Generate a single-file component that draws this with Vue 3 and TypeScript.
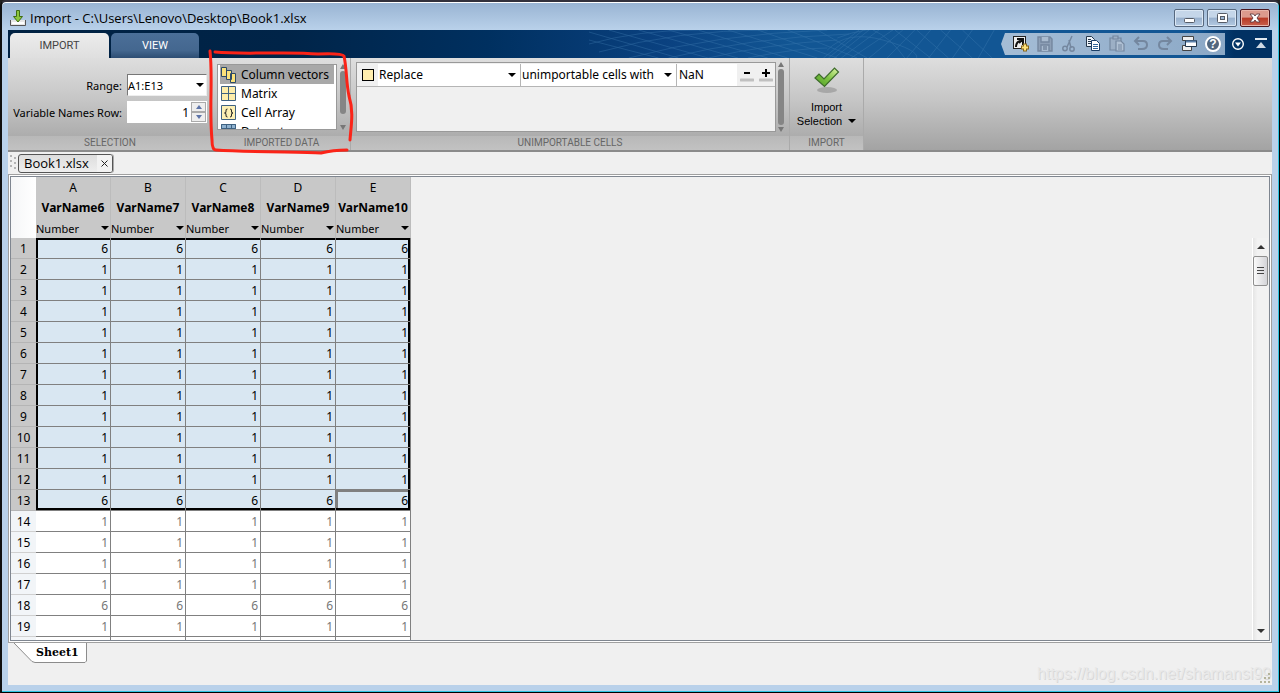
<script setup lang="ts">
import { ref } from 'vue'

interface Column {
  letter: string
  name: string
}

const columns: Column[] = [
  { letter: 'A', name: 'VarName6' },
  { letter: 'B', name: 'VarName7' },
  { letter: 'C', name: 'VarName8' },
  { letter: 'D', name: 'VarName9' },
  { letter: 'E', name: 'VarName10' },
]

const values: number[] = [6, 1, 1, 1, 1, 1, 1, 1, 1, 1, 1, 1, 6, 1, 1, 1, 1, 6, 1]
const selectedRows = 13

const nameRow = ref<number>(1)
const replacement = ref<string>('NaN')
const outputTypes: string[] = ['Column vectors', 'Matrix', 'Cell Array', 'Dataset']
const outputType = ref<string>('Column vectors')

function step(delta: number): void {
  nameRow.value = Math.max(0, nameRow.value + delta)
}

function cellClass(row: number, col: number): Record<string, boolean> {
  const inside = row <= selectedRows
  const last = columns.length - 1
  return {
    inside,
    'edge-top': inside && row === 1,
    'edge-bottom': row === selectedRows,
    'edge-left': inside && col === 0,
    'edge-right': inside && col === last,
  }
}
</script>

<template>
  <div class="window">
    <header class="titlebar">
      <svg class="app-icon" width="18" height="18" viewBox="0 0 18 18" aria-hidden="true">
        <path d="M1.500 11v5.500h15V11" fill="#e6e6e6" stroke="#555" />
        <path d="M3 14h12" stroke="#fff" stroke-width="2" />
        <path d="M7.500 1.500h3v6h3L9 13 4.500 7.500h3z" fill="#8cc63f" stroke="#3f6d12" />
      </svg>
      <h1>Import - C:\Users\Lenovo\Desktop\Book1.xlsx</h1>
      <div class="window-buttons">
        <button type="button" aria-label="Minimize">
          <svg width="28" height="16" viewBox="1 0 28 16"><rect x="10.500" y="8.500" width="10" height="4" rx="1" fill="#fff" stroke="#555b66" /></svg>
        </button>
        <button type="button" aria-label="Maximize">
          <svg width="28" height="16" viewBox="1 0 28 16"><rect x="10.500" y="3.500" width="10" height="9" rx="1" fill="#fff" stroke="#555b66" /><rect x="13.500" y="6.500" width="4" height="3" fill="#9db6d3" stroke="#555b66" /></svg>
        </button>
        <button type="button" class="close" aria-label="Close">
          <svg width="28" height="16" viewBox="1 0 28 16"><path d="M10 4h3.500L15 6l1.500-2H20l-3 4 3 4h-3.500L15 10l-1.500 2H10l3-4z" fill="#fff" stroke="#5b3a40" stroke-width=".9" /></svg>
        </button>
      </div>
    </header>

    <div class="client">
      <nav class="band">
        <svg class="mesh" viewBox="0 0 420 28" preserveAspectRatio="none" aria-hidden="true">
          <g fill="none" stroke="#4a86ba" stroke-width=".7" opacity=".45">
            <path d="M20 0 120 28M50 0l100 28M80 0l100 28M110 0l90 28M140 0l90 28M170 0l80 28M200 0l70 28M230 0l50 28M0 10l70 18M0 2l90 26" />
            <path d="M10 22Q90 0 180 0M40 28Q130 4 240 0M80 28Q160 8 262 4M120 28Q180 14 250 10M160 28Q210 18 240 18M0 14Q50 0 110 0" />
            <path d="M236 28 272 0M241 28 276 0M247 28 282 0M254 28 292 0M264 28 306 0M282 28 316 0M300 28 328 0M320 28 344 0M342 28 364 0M366 28 386 0M392 28 408 0" />
            <path d="M240 20Q260 0 296 10T330 28M286 0Q304 8 318 28M308 0l36 28M330 0l32 28M354 0l32 28M376 0l30 28M250 8Q280-4 306 0" />
          </g>
        </svg>
        <button type="button" class="tab current">IMPORT</button>
        <button type="button" class="tab">VIEW</button>
        <div class="quick">
          <button type="button" aria-label="Shortcut">
            <svg width="18" height="18" viewBox="0 0 18 18"><rect x="1.500" y="1.500" width="12" height="12" fill="#eee" stroke="#222" /><path d="M4 12q0-5 4-6M5 4h6v6M11 4 7 8" fill="none" stroke="#111" stroke-width="2" /><path d="M13 8.500v8M9 12.500h8" stroke="#87671c" stroke-width="4" /><path d="M13 9.500v6M10 12.500h6" stroke="#ffe27a" stroke-width="2" /></svg>
          </button>
          <button type="button" aria-label="Save">
            <svg width="18" height="18" viewBox="0 0 18 18" fill="none" stroke="#74879f" stroke-width="1.400"><path d="M2 2h12l2 2v12H2z" fill="#8d9fb6" /><path d="M5 2v5h8V2M5 16v-6h8v6" fill="#a9bbcf" /><path d="M7 12h4M7 14h4" /></svg>
          </button>
          <button type="button" aria-label="Cut">
            <svg width="18" height="18" viewBox="0 0 18 18" fill="none" stroke="#74879f" stroke-width="1.500"><path d="M12 1 7 12M9 5l2 8" /><circle cx="5" cy="13.500" r="2.200" /><circle cx="12" cy="14" r="2.200" /></svg>
          </button>
          <button type="button" aria-label="Copy">
            <svg width="18" height="18" viewBox="0 0 18 18"><path d="M2.500 1.500h5l3 3v7h-8z" fill="#eef4fa" stroke="#24364a" /><path d="M4 4.500h3M4 6.500h5M4 8.500h5" stroke="#24364a" /><path d="M7.500 5.500h5l3 3v7h-8z" fill="#fff" stroke="#1c3f66" /><path d="M9 9.500h5M9 11.500h5M9 13.500h5" stroke="#336699" /></svg>
          </button>
          <button type="button" aria-label="Paste">
            <svg width="18" height="18" viewBox="0 0 18 18" fill="#9cafc5" stroke="#74879f" stroke-width="1.200"><path d="M2 3h11v12H2z" /><path d="M5 1h5v3H5z" /><path d="M8 6h5l3 3v7H8z" fill="#b0c1d4" /><path d="M10 10h4M10 12h4M10 14h4" /></svg>
          </button>
          <button type="button" aria-label="Undo">
            <svg width="18" height="18" viewBox="0 0 18 18" fill="none" stroke="#74879f" stroke-width="2"><path d="M3 6h8q4 0 4 4t-5 4H6M7 2 3 6l4 4" /></svg>
          </button>
          <button type="button" aria-label="Redo">
            <svg width="18" height="18" viewBox="0 0 18 18" fill="none" stroke="#74879f" stroke-width="2"><path d="M15 6H7q-4 0-4 4t5 4h4M11 2l4 4-4 4" /></svg>
          </button>
          <button type="button" aria-label="Switch windows">
            <svg width="18" height="18" viewBox="0 0 18 18"><path d="M2.500 1.500h11v4h-11z" fill="#eee" stroke="#444" /><path d="M2.500 10.500h9v5h-9z" fill="#eee" stroke="#444" /><path d="M5.500 5.500h11v6h-11z" fill="#fff" stroke="#23384f" /><path d="M6 6.500h10" stroke="#5a7fa8" stroke-width="2" /></svg>
          </button>
          <button type="button" aria-label="Help" class="help">
            <span>?</span>
          </button>
        </div>
        <button type="button" class="corner" aria-label="Options">
          <svg width="14" height="14" viewBox="0 0 14 14"><circle cx="7" cy="7" r="5.300" fill="none" stroke="#fff" stroke-width="1.400" /><path d="M4 5.500h6L7 9.500z" fill="#fff" /></svg>
        </button>
        <button type="button" class="corner" aria-label="Minimize toolstrip">
          <svg width="14" height="14" viewBox="0 0 14 14"><path d="M1 2h12" stroke="#e2e9f0" stroke-width="2" /><path d="M7 5l5 6H2z" fill="#cfd9e4" /></svg>
        </button>
      </nav>

      <div class="toolstrip">
        <section class="section selection">
          <div class="body">
            <label for="range">Range:</label>
            <div class="pick range-pick">
              <select id="range"><option>A1:E13</option></select>
            </div>
            <label for="name-row">Variable Names Row:</label>
            <div class="spin">
              <input id="name-row" v-model="nameRow" type="text" inputmode="numeric" />
              <div class="spin-buttons">
                <button type="button" aria-label="Increase" @click="step(1)"><svg width="6" height="4" viewBox="0 0 6 4"><path d="M0 4 3 0l3 4z" fill="#5d74a8" /></svg></button>
                <button type="button" aria-label="Decrease" @click="step(-1)"><svg width="6" height="4" viewBox="0 0 6 4"><path d="M0 0h6L3 4z" fill="#5d74a8" /></svg></button>
              </div>
            </div>
          </div>
          <h2>SELECTION</h2>
        </section>

        <section class="section data">
          <div class="body">
            <ul class="types">
              <li v-for="(type, i) in outputTypes" :key="type">
                <button type="button" :class="{ chosen: type === outputType }" @click="outputType = type">
                  <svg width="16" height="16" viewBox="0 0 16 16" aria-hidden="true">
                    <g v-if="i === 0" fill="#fbe27a" stroke="#2d4a66"><path d="M.5.5h5v9h-5zM5.500 3.500h5v9h-5zM9.500 6.500h5v9h-5z" /></g>
                    <g v-else-if="i === 1"><path d="M.5.5h14v14H.5z" fill="#fdedaa" stroke="#3f6282" /><path d="M7.500.5v14M.5 7.500h14" stroke="#3f6282" /></g>
                    <g v-else-if="i === 2" fill="none" stroke="#3f6282"><path d="M.5.5h14v14H.5z" fill="#fdf0b4" /><path d="M6.500 4q-2 0-1.500 2t-1.500 2Q5.500 8 5 10t1.500 2M9 4q2 0 1.500 2T12 8q-2 0-1.500 2T9 12" stroke="#222" /></g>
                    <g v-else><path d="M.5.5h14v14H.5z" fill="#fff" stroke="#3f6282" /><path d="M.5.5h14v4H.5z" fill="#8fb2d0" stroke="#3f6282" /><path d="M5.500.5v14M10.500.5v14M.5 8.500h14" stroke="#3f6282" /></g>
                  </svg>
                  {{ type }}
                </button>
              </li>
            </ul>
            <div class="slider list-slider"><i class="up"></i><i class="bar"></i><i class="down"></i></div>
          </div>
          <h2>IMPORTED DATA</h2>
        </section>

        <section class="section rules">
          <div class="body">
            <div class="rule-list">
              <div class="rule">
                <span class="swatch"></span>
                <div class="pick action-pick">
                  <select aria-label="Action"><option>Replace</option></select>
                </div>
                <div class="pick target-pick">
                  <select aria-label="Target"><option>unimportable cells with</option></select>
                </div>
                <input v-model="replacement" type="text" aria-label="Replacement value" />
                <button type="button" aria-label="Remove rule"><svg width="14" height="14" viewBox="0 0 14 14"><path d="M4 5h6" stroke="#000" stroke-width="2" /><path d="M1 12h12" stroke="#c0c0c0" stroke-width="3" stroke-linecap="round" /></svg></button>
                <button type="button" aria-label="Add rule"><svg width="14" height="14" viewBox="0 0 14 14"><path d="M3 5h8M7 1v8" stroke="#000" stroke-width="2" /><path d="M1 12h12" stroke="#c0c0c0" stroke-width="3" stroke-linecap="round" /></svg></button>
              </div>
            </div>
            <div class="slider"><i class="up"></i><i class="bar"></i><i class="down"></i></div>
          </div>
          <h2>UNIMPORTABLE CELLS</h2>
        </section>

        <section class="section run">
          <div class="body">
            <button type="button" class="import">
              <svg width="28" height="28" viewBox="0 0 28 28" aria-hidden="true">
                <defs>
                  <linearGradient id="tick" x1="0" y1="1" x2="1" y2="0"><stop offset="0" stop-color="#4f9e26" /><stop offset=".5" stop-color="#7dc242" /><stop offset="1" stop-color="#e0f7a8" /></linearGradient>
                </defs>
                <ellipse cx="14" cy="24" rx="10" ry="3" fill="#8f8f8f" opacity=".6" />
                <path d="M2 12l4-4 5 5L21.500 2l4 4L11.500 20.500z" fill="url(#tick)" stroke="#3d6b2b" stroke-width="1.200" />
              </svg>
              <span>Import</span>
              <span class="more">Selection <i></i></span>
            </button>
          </div>
          <h2>IMPORT</h2>
        </section>
      </div>

      <div class="documents">
        <svg class="grip" width="6" height="16" viewBox="0 0 6 16" fill="#b4b4b4" aria-hidden="true"><path d="M0 1h2v2H0zM4 3h2v2H4zM0 6h2v2H0zM4 8h2v2H4zM0 11h2v2H0zM4 13h2v2H4z" /></svg>
        <div class="document">
          <a href="#">Book1.xlsx</a>
          <button type="button" aria-label="Close Book1.xlsx"><svg width="7" height="7" viewBox="0 0 7 7"><path d="M.5.5l6 6M6.500.5l-6 6" stroke="#222" /></svg></button>
        </div>
      </div>

      <main class="frame">
        <div class="sheet">
          <table>
            <thead>
              <tr>
                <th class="blank"></th>
                <th v-for="column in columns" :key="column.letter" scope="col">
                  <span class="letter">{{ column.letter }}</span>
                  <span class="name">{{ column.name }}</span>
                  <div class="pick kind">
                    <select :aria-label="'Type of ' + column.name"><option>Number</option></select>
                  </div>
                </th>
              </tr>
            </thead>
            <tbody>
              <tr v-for="(value, r) in values" :key="r">
                <th scope="row" :class="{ marked: r < selectedRows }">{{ r + 1 }}</th>
                <td v-for="(column, c) in columns" :key="column.letter" :class="cellClass(r + 1, c)">{{ value }}</td>
              </tr>
              <tr>
                <th></th>
                <td v-for="column in columns" :key="column.letter"></td>
              </tr>
            </tbody>
          </table>
          <div class="scroll">
            <button type="button" aria-label="Scroll up"><svg width="8" height="4" viewBox="0 0 8 4"><path d="M0 4 4 0l4 4z" fill="#333" /></svg></button>
            <div class="thumb"><svg width="7" height="8" viewBox="0 0 7 8"><path d="M0 .5h7M0 3.500h7M0 6.500h7" stroke="#444" /></svg></div>
            <button type="button" class="end" aria-label="Scroll down"><svg width="8" height="4" viewBox="0 0 8 4"><path d="M0 0h8L4 4z" fill="#333" /></svg></button>
          </div>
        </div>
      </main>

      <footer class="status">
        <button type="button" class="sheet-tab">
          <svg width="80" height="20" viewBox="0 0 80 20" aria-hidden="true"><path d="M6 0 24 18.500 27 19.500H77l1.500-1.500V0" fill="#fff" stroke="#8c8c8c" /></svg>
          <span>Sheet1</span>
        </button>
        <span class="watermark">https://blog.csdn.net/shamansi99</span>
        <svg class="resize" width="12" height="12" viewBox="0 0 12 12" fill="#b5b49c" aria-hidden="true"><path d="M8 0h2v2H8zM8 4h2v2H8zM4 4h2v2H4zM8 8h2v2H8zM4 8h2v2H4zM0 8h2v2H0z" /></svg>
      </footer>
    </div>

    <svg class="marker" width="148" height="108" viewBox="0 0 148 108" aria-hidden="true">
      <path d="M3 3C6 30 2 60 5 92Q5 102 9 102C40 104 90 104 114 105Q126 102 140 102M8 4C40 7 80 3 111 6Q135 5 137 8C140 22 139 34 142 48C147 64 144 78 143 92" fill="none" stroke="#fb2418" stroke-width="3" stroke-linecap="round" stroke-linejoin="round" />
    </svg>
  </div>
</template>

<style>
html,
body,
#app {
  height: 100%;
  margin: 0;
}

body {
  overflow: hidden;
  background: #222;
}
</style>

<style scoped>
* {
  box-sizing: border-box;
}

button,
input,
select {
  margin: 0;
  padding: 0;
  border: 0;
  border-radius: 0;
  background: none;
  color: inherit;
  font: inherit;
}

svg {
  display: block;
  flex: none;
}

.window {
  position: relative;
  display: flex;
  flex-direction: column;
  height: 100%;
  padding: 0 7px 7px 6px;
  border: 1px solid #000;
  border-top: 2px solid #33313c;
  border-left: 2px solid #101010;
  border-radius: 6px 6px 0 0;
  background: linear-gradient(#98b3d2, #b9d1ea 28px);
  box-shadow: inset -1px -1px #2fc3e0, inset 0 1px #fff;
  color: #000;
  font-family: "Noto Sans", "Open Sans", sans-serif;
  font-size: 12px;
}

.titlebar {
  display: flex;
  align-items: center;
  flex: none;
  height: 28px;
  padding: 4px 2px 0 1px;
}

.titlebar h1 {
  flex: 1;
  margin: 0 0 0 3px;
  font-family: "Open Sans", "Noto Sans", sans-serif;
  font-size: 13px;
  font-weight: 400;
  line-height: 20px;
}

.window-buttons {
  display: flex;
  gap: 3px;
}

.window-buttons button {
  height: 18px;
  border: 1px solid #56687f;
  border-radius: 2px;
  background: linear-gradient(#c5d6e9 45%, #98b0cd 50%, #b4cae2);
  box-shadow: inset 0 0 0 1px #dbe7f4;
}

.window-buttons .close {
  border-color: #4b1720;
  background: linear-gradient(#dc9a8d 45%, #b83a26 50%, #c9604d);
  box-shadow: inset 0 0 0 1px #e8b5aa;
}

.client {
  display: flex;
  flex: 1;
  flex-direction: column;
  min-height: 0;
  background: #f0f0f0;
}

.band {
  position: relative;
  display: flex;
  align-items: flex-end;
  flex: none;
  gap: 2px;
  height: 28px;
  padding-left: 2px;
  background: linear-gradient(90deg, #002142, #002448 22%, #003060 38%, #0a4180 52%, #125694 62%, #125694 94%, #013163 97%);
}

.mesh {
  position: absolute;
  top: 0;
  right: 21%;
  width: 33%;
  height: 28px;
}

.tab {
  position: relative;
  width: 88px;
  height: 25px;
  border-radius: 5px 5px 0 0;
  background: linear-gradient(#4b6f98, #44678f 70%, #2d4d73);
  color: #fff;
  font-family: Roboto, "Liberation Sans", sans-serif;
  font-size: 11px;
}

.tab.current {
  width: 99px;
  background: linear-gradient(#ececec, #dfdfdf);
  color: #444;
}

.quick {
  position: relative;
  display: flex;
  align-items: center;
  align-self: flex-start;
  gap: 6px;
  height: 22px;
  margin: 3px 0 0 auto;
  padding: 0 3px 0 11px;
  background: linear-gradient(90deg, #a5bdd6, #8ba8c6);
  clip-path: polygon(4px 0, 100% 0, 100% 100%, 4px 100%, 0 50%);
}

.quick .help {
  width: 16px;
  height: 16px;
  margin: 0 1px;
  border: 2px solid #fff;
  border-radius: 50%;
  background: #52677e;
  color: #fff;
  font: bold 12px/12px "Liberation Sans", Arial, sans-serif;
}

.corner {
  align-self: center;
  width: 21px;
  padding-left: 4px;
}

.corner:last-child {
  margin-right: 1px;
}

.toolstrip {
  display: flex;
  flex: none;
  height: 94px;
  border-bottom: 2px solid #8b8b8b;
  background: linear-gradient(#dedede, #c6c6c6 45%, #a3a3a3);
}

.section {
  display: flex;
  flex: none;
  flex-direction: column;
  background: linear-gradient(#b8b8b8, #c2c2c2) left bottom / 100% 14px no-repeat;
}

.section + .section {
  border-left: 1px solid #aaa;
}

.section .body {
  display: flex;
  height: 78px;
}

.section h2 {
  margin: 0;
  color: #666;
  font: 400 10px/14px Roboto, "Liberation Sans", sans-serif;
  text-align: center;
}

.selection {
  width: 204px;
}

.selection .body {
  display: grid;
  grid-template-columns: 114px 80px;
  grid-template-rows: 22px 22px;
  align-items: center;
  gap: 5px;
  padding-top: 16px;
}

.selection label {
  font-size: 11px;
  text-align: right;
  white-space: nowrap;
}

.pick {
  position: relative;
  display: flex;
  background: #fff;
}

.pick select {
  flex: 1;
  width: 100%;
  appearance: none;
}

.pick::after {
  position: absolute;
  top: calc(50% - 2px);
  right: 4px;
  border: 4px solid transparent;
  border-top: 4px solid #000;
  border-bottom: 0;
  content: "";
  pointer-events: none;
}

.range-pick {
  height: 22px;
  border: 1px solid #999;
  border-color: #777 #eee #eee #777;
  font-size: 11px;
}

.range-pick::after {
  right: 2px;
}

.spin {
  display: flex;
  height: 22px;
  padding: 1px;
  background: #fff;
}

.spin input {
  flex: 1;
  min-width: 0;
  padding-right: 2px;
  text-align: right;
}

.spin-buttons {
  display: flex;
  flex-direction: column;
  width: 15px;
}

.spin-buttons button {
  display: grid;
  flex: 1;
  place-items: center;
  border: 1px solid #aaa;
  background: #eee;
}

.data {
  width: 138px;
}

.data .body {
  gap: 2px;
  padding: 6px 0 6px 4px;
}

.section.data {
  border-left-color: transparent;
}

.types {
  width: 120px;
  margin: 0;
  padding: 0 2px;
  overflow: hidden;
  border: 1px solid #999;
  background: #fff;
  list-style: none;
}

.types button {
  display: flex;
  align-items: center;
  gap: 4px;
  width: 100%;
  height: 19px;
  padding-left: 1px;
  line-height: 18px;
  white-space: nowrap;
}

.types .chosen {
  background: #a8a8a8;
}

.slider {
  display: flex;
  flex-direction: column;
  align-items: center;
  gap: 2px;
  width: 8px;
}

.slider .up {
  border: 3px solid transparent;
  border-top: 0;
  border-bottom: 5px solid #777;
}

.slider .bar {
  flex: 1;
  width: 6px;
  border-radius: 3px;
  background: #858585;
}

.slider .down {
  border: 3px solid transparent;
  border-top: 5px solid #777;
  border-bottom: 0;
}

.list-slider .bar {
  margin-bottom: 9px;
}

.rules {
  width: 439px;
}

.rules .body {
  gap: 1px;
  padding: 4px 4px 4px 5px;
}

.rule-list {
  flex: 1;
  border: 1px solid #999;
  background: #f0f0f0;
}

.rule {
  display: flex;
  align-items: center;
  height: 24px;
  border-bottom: 1px solid #b5b5b5;
}

.swatch {
  width: 12px;
  height: 12px;
  margin: 0 4px 0 5px;
  border: 1px solid #000;
  background: #ffedae;
}

.rule .pick,
.rule input {
  height: 22px;
  background: #fff;
}

.rule .pick {
  border-right: 1px solid #b5b5b5;
}

.action-pick {
  width: 143px;
}

.target-pick {
  width: 156px;
}

.rule .pick select {
  padding-left: 1px;
}

.rule input {
  width: 60px;
  padding-left: 2px;
}

.rule button {
  flex: 1;
  padding-left: 3px;
}

.run {
  width: 75px;
  border-right: 1px solid #aaa;
}

.import {
  display: flex;
  flex-direction: column;
  align-items: center;
  width: 100%;
  padding-top: 8px;
  font: 11px/14px "Liberation Sans", Arial, sans-serif;
}

.import svg {
  margin-bottom: 6px;
}

.more {
  display: flex;
  align-items: center;
  gap: 6px;
}

.more i {
  border: 4px solid transparent;
  border-top-color: #000;
  border-bottom: 0;
}

.documents {
  display: flex;
  flex: none;
  height: 22px;
  padding: 2px 2px;
}

.grip {
  margin-right: 2px;
}

.document {
  display: flex;
  height: 19px;
  overflow: hidden;
  border: 1px solid #555;
  border-radius: 3px;
  background: linear-gradient(#ddd, #eee);
  box-shadow: 1px 0 #aaa;
  font-family: "Open Sans", "Noto Sans", sans-serif;
  font-size: 13px;
  line-height: 17px;
}

.document a {
  padding: 0 8px 0 5px;
  color: #000;
  text-decoration: none;
}

.document button {
  display: grid;
  width: 15px;
  place-items: center;
  background: #f2f2f2;
}

.frame {
  display: flex;
  flex: 1;
  min-height: 0;
  padding: 1px;
  border: 1px solid #a0a0a0;
  background: #fff;
}

.sheet {
  display: flex;
  flex: 1;
  align-items: flex-start;
  justify-content: space-between;
  overflow: hidden;
  border: 1px solid #7f8690;
  background: #f0f0f0;
}

table {
  width: 400px;
  border-collapse: separate;
  border-spacing: 0;
  table-layout: fixed;
  background: #fff;
}

th,
td {
  padding: 0;
  font-weight: 400;
}

thead th {
  height: 61px;
  padding-top: 1px;
  border-right: 1px solid #bcbcbc;
  background: #c8c8c8;
}

thead .blank {
  width: 25px;
  border-right: 0;
  background: linear-gradient(90deg, #f5f6f7, #fff);
}

.letter,
.name {
  display: block;
  height: 20px;
  line-height: 20px;
  white-space: nowrap;
}

.name {
  font-weight: 700;
}

.kind {
  height: 20px;
  background: none;
  font-size: 11px;
}

.kind::after {
  right: 1px;
}

tbody th,
td {
  height: 21px;
  padding-top: 2px;
  line-height: 18px;
}

tbody th {
  border-bottom: 1px solid #d0d0d0;
  background: #f2f5f8;
}

tbody th.marked {
  border-bottom-color: #b5b5b5;
  background: #c8c8c8;
}

td {
  padding-right: 2px;
  border-right: 1px solid #808080;
  border-bottom: 1px solid #808080;
  color: #777;
  text-align: right;
}

td.inside {
  background: #d9e7f2;
  color: #000;
}

td.edge-top {
  box-shadow: inset 0 2px #000;
}

td.edge-bottom {
  box-shadow: inset 0 -2px #000;
}

td.edge-left {
  box-shadow: inset 2px 0 #000;
}

td.edge-right {
  box-shadow: inset -2px 0 #000;
}

td.edge-top.edge-left {
  box-shadow: inset 2px 2px #000;
}

td.edge-top.edge-right {
  box-shadow: inset -2px 2px #000;
}

td.edge-bottom.edge-left {
  box-shadow: inset 2px -2px #000;
}

td.edge-bottom.edge-right {
  box-shadow: inset -2px -2px #000, inset 2px 2px #808080;
}

.scroll {
  display: flex;
  align-self: stretch;
  flex-direction: column;
  width: 16px;
  margin: 61px 1px 0 0;
  border-left: 1px solid #fff;
  background: linear-gradient(90deg, #e5e5e5, #f2f2f2 30%);
}

.scroll button {
  display: grid;
  height: 18px;
  place-items: center;
}

.scroll .end {
  margin-top: auto;
}

.thumb {
  display: grid;
  height: 30px;
  place-items: center;
  border: 1px solid #8f8f8f;
  border-radius: 2px;
  background: linear-gradient(90deg, #fafafa, #d4d4d8);
}

.status {
  display: flex;
  flex: none;
  justify-content: flex-end;
  height: 42px;
}

.sheet-tab {
  position: relative;
  display: flex;
  margin-right: auto;
  height: 20px;
}

.sheet-tab span {
  position: absolute;
  top: 1px;
  left: 28px;
  font: bold 11px/18px "DejaVu Serif", "Liberation Serif", serif;
}

.watermark {
  align-self: flex-end;
  margin-right: -11px;
  color: #e9e9e9;
  font: 16px/22px "Liberation Sans", Arial, sans-serif;
  text-shadow: 1px 1px #d8d8d8;
}

.resize {
  align-self: flex-end;
}

.marker {
  position: absolute;
  top: 46px;
  left: 205px;
  pointer-events: none;
}
</style>
